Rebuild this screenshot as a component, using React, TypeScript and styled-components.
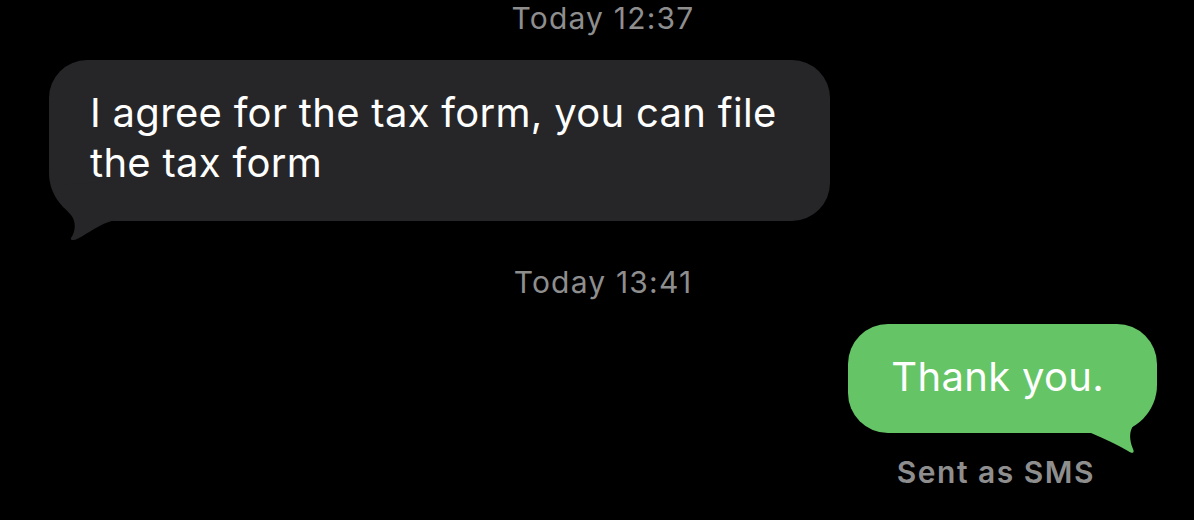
import React from 'react';
import styled, { createGlobalStyle } from 'styled-components';

const GlobalStyle = createGlobalStyle`
  html, body {
    margin: 0;
    padding: 0;
    background: #000;
  }
  body {
    font-family: Inter, "Noto Sans", "Liberation Sans", sans-serif;
    -webkit-font-smoothing: antialiased;
  }
`;

type Side = 'in' | 'out';

const BubbleTail = ({ side }: { side: Side }) => {
  if (side === 'in') {
    return (
      <Tail side={side} viewBox="0 0 70 60" width={70} height={60}>
        <path
          d="M3,4 C6,14 14,26 22,34 C27,40 27,50 22,57 C21,59 24,60 28,58 C40,52 50,43 66,39 L66,0 Z"
          fill="#262629"
        />
      </Tail>
    );
  }
  return (
    <Tail side={side} viewBox="0 0 70 60" width={70} height={60}>
      <path
        d="M66,2 C62,12 54,24 47,32 C42,37 42,47 46,56 C48,60 45,61 41,58 C31,52 18,46 4,40 L4,0 Z"
        fill="#65c466"
      />
    </Tail>
  );
};

const App = () => {
  return (
    <>
      <GlobalStyle />
      <Screen>
        <Timestamp>Today 12:37</Timestamp>
        <MessageRow side="in">
          <Bubble side="in">
            I agree for the tax form, you can file the tax form
            <BubbleTail side="in" />
          </Bubble>
        </MessageRow>
        <Timestamp spaced>Today 13:41</Timestamp>
        <MessageRow side="out">
          <Bubble side="out">
            Thank you.
            <BubbleTail side="out" />
          </Bubble>
        </MessageRow>
        <Status>Sent as SMS</Status>
      </Screen>
    </>
  );
};

export default App;

const Screen = styled.div`
  width: 1194px;
  height: 520px;
  background: #000;
  display: flex;
  flex-direction: column;
  overflow: hidden;
`;

const Timestamp = styled.div<{ spaced?: boolean }>`
  margin-top: ${({ spaced }) => (spaced ? '43px' : '0')};
  padding-left: 12px;
  text-align: center;
  color: #8e8e8f;
  font-size: 30px;
  line-height: 36px;
  font-weight: 400;
  letter-spacing: 1.2px;
`;

const MessageRow = styled.div<{ side: Side }>`
  display: flex;
  justify-content: ${({ side }) => (side === 'in' ? 'flex-start' : 'flex-end')};
  margin-top: 24px;
  padding: ${({ side }) => (side === 'in' ? '0 0 0 49px' : '0 37px 0 0')};
`;

const Bubble = styled.div<{ side: Side }>`
  position: relative;
  box-sizing: border-box;
  color: #fff;
  font-size: 40px;
  line-height: 50px;
  letter-spacing: 0.3px;
  background: ${({ side }) => (side === 'in' ? '#262629' : '#65c466')};
  width: ${({ side }) => (side === 'in' ? '781px' : 'auto')};
  padding: ${({ side }) =>
    side === 'in' ? '28px 40px 33px 41px' : '28px 53px 31px 43px'};
  border-radius: ${({ side }) =>
    side === 'in' ? '38px 38px 38px 48px' : '40px 40px 48px 40px'};
`;

const Tail = styled.svg<{ side: Side }>`
  position: absolute;
  bottom: -20px;
  ${({ side }) => (side === 'in' ? 'left: 0;' : 'right: 0;')}
  display: block;
`;

const Status = styled.div`
  align-self: flex-end;
  margin-top: 21px;
  margin-right: 99px;
  color: #8e8e8f;
  font-size: 30px;
  line-height: 36px;
  font-weight: 600;
  letter-spacing: 1.5px;
`;
